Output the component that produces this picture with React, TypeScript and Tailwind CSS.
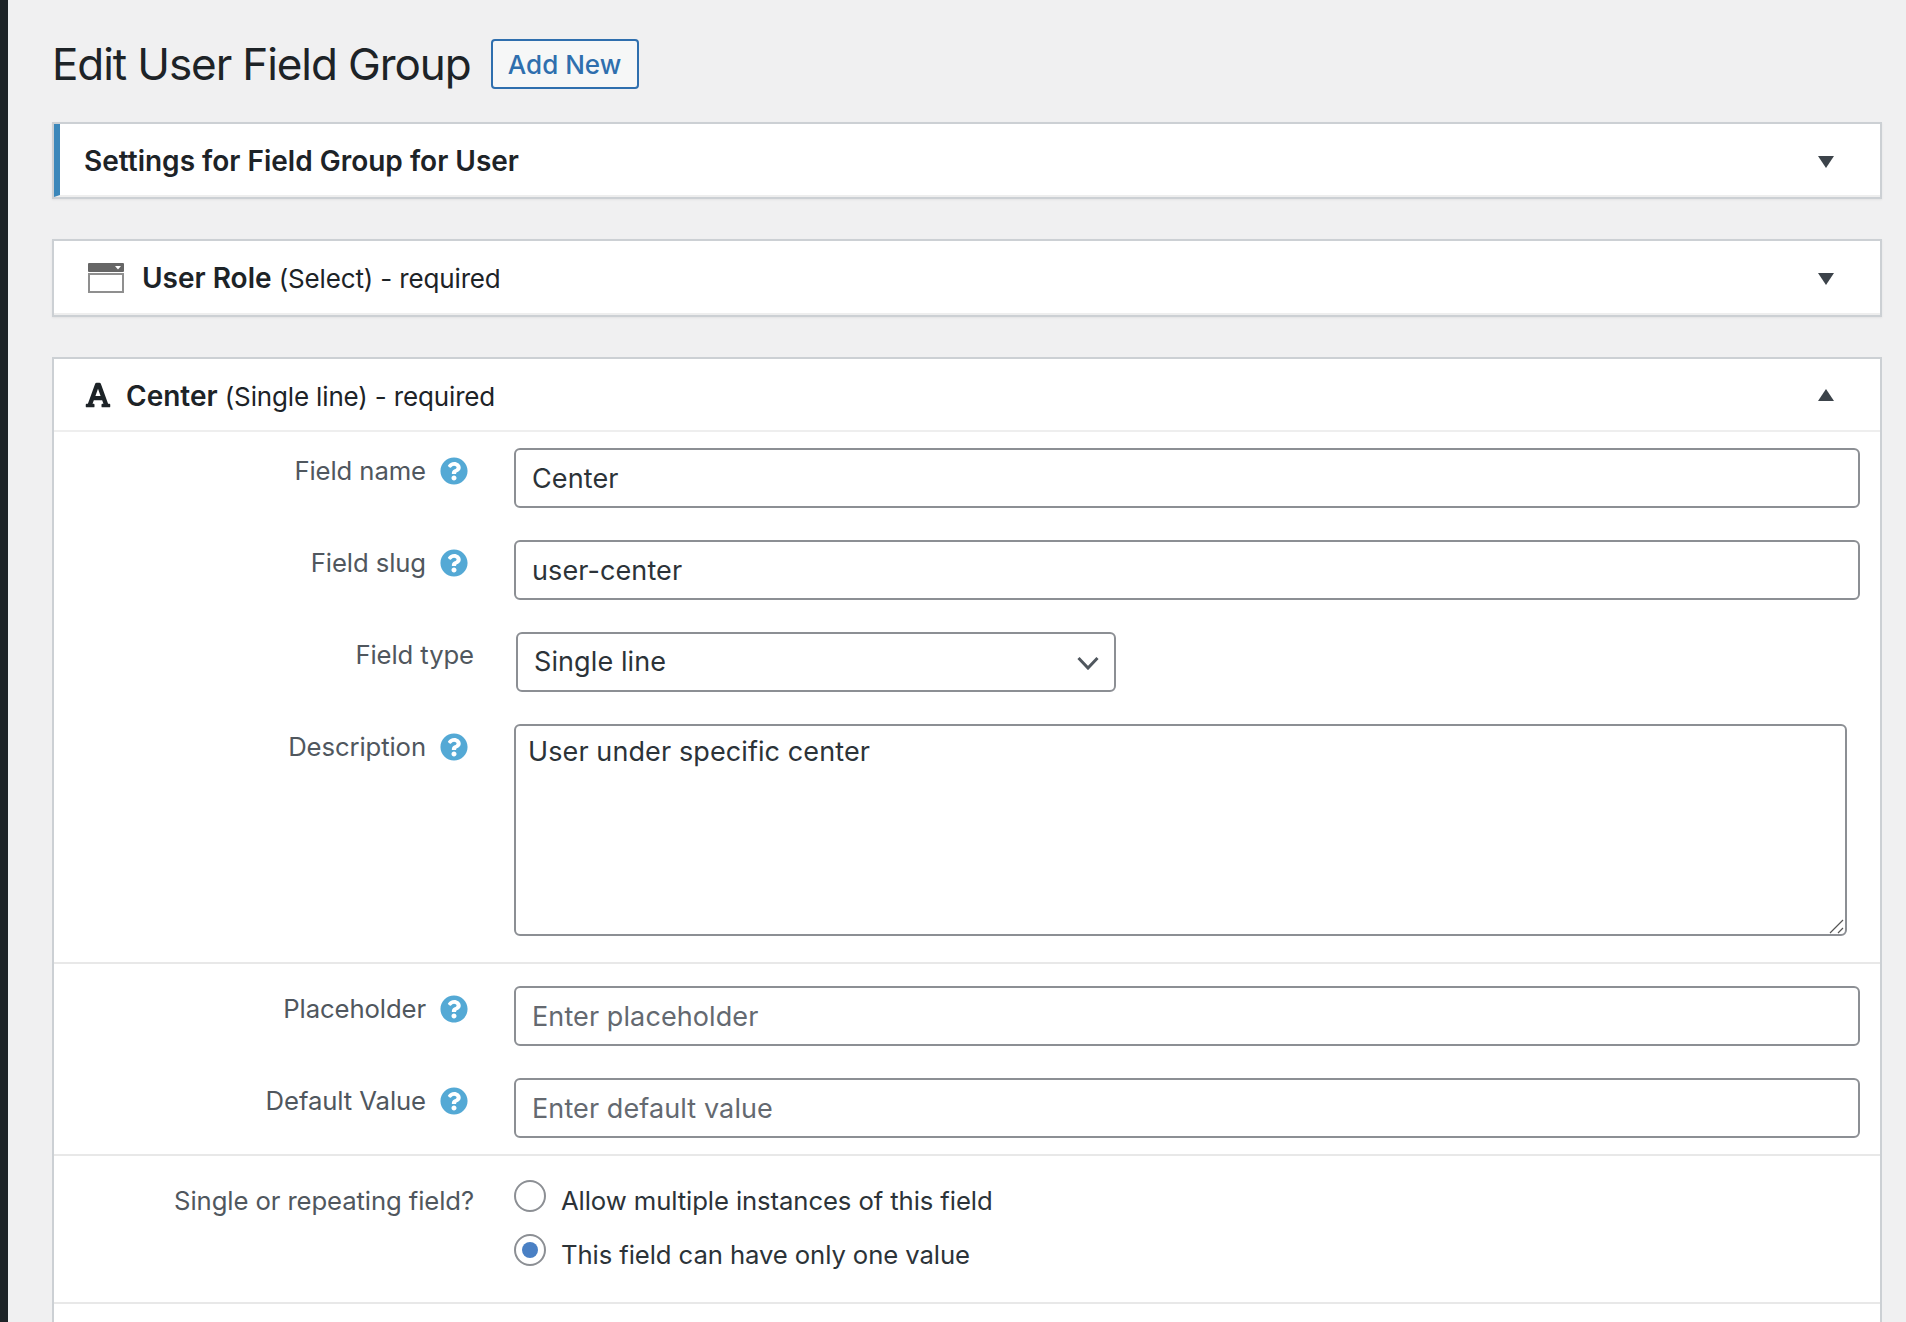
import { FaFont, FaQuestionCircle } from "react-icons/fa";

const font = { fontFamily: "Inter, 'Noto Sans', sans-serif" };

function Caret({ up, className }: { up?: boolean; className?: string }) {
    return (
        <svg width="16" height="12" viewBox="0 0 16 12" className={`mr-[46px] shrink-0 ${className}`}>
            <path d={up ? "M8 0L16 12H0Z" : "M0 0H16L8 12Z"} fill="#3c434a" />
        </svg>
    );
}

function SelectIcon() {
    return (
        <svg width="36" height="30" viewBox="0 0 36 30" className="shrink-0 mt-[2px]">
            <rect x="0" y="0" width="36" height="9" rx="1" fill="#666666" />
            <path d="M27 3H33L30 6.5Z" fill="#ffffff" />
            <rect x="1" y="11" width="34" height="18" fill="#ffffff" stroke="#8f8f8f" strokeWidth="2" />
        </svg>
    );
}

function Label({ text, help, height = "h-[46px]" }: { text: string; help?: boolean; height?: string }) {
    return (
        <div className={`w-[420px] shrink-0 flex justify-end items-center ${height} ${help ? "pr-[6px]" : ""}`}>
            <span className="text-[25.7px] leading-none text-[#50575e] tracking-[-0.1px]">{text}</span>
            {help && <FaQuestionCircle className="ml-[14px] text-[#54a9d5]" size={28} />}
        </div>
    );
}

function TextField({ value, placeholder }: { value?: string; placeholder?: string }) {
    return (
        <input
            readOnly
            value={value}
            placeholder={placeholder}
            className="w-[1346px] h-[60px] rounded-[6px] border-2 border-[#8c8f94] bg-white px-[16px] pt-px text-[27px] text-[#2c3338] tracking-[0.1px] placeholder:text-[#646970] outline-none"
            style={font}
        />
    );
}

function PanelHead({ children }: { children: React.ReactNode }) {
    return (
        <section className="border-2 border-[#ccd0d4] bg-white shadow-[0_1px_2px_rgba(0,0,0,0.06)]">
            {children}
        </section>
    );
}

function Radio({ checked, text }: { checked?: boolean; text: string }) {
    return (
        <div className="flex items-start gap-[15px] h-8">
            <span className="w-8 h-8 rounded-full border-2 border-[#8c8f94] bg-white flex items-center justify-center shrink-0">
                {checked && <span className="w-4 h-4 rounded-full bg-[#4a80c4]" />}
            </span>
            <span className="text-[25.7px] leading-none text-[#2c3338] pt-[8px] tracking-[-0.1px]">{text}</span>
        </div>
    );
}

export default function App() {
    return (
        <div className="h-[1322px] overflow-hidden flex bg-[#f0f0f1]" style={font}>
            <aside className="w-2 bg-[#1d2327] shrink-0" />
            <main className="w-[1830px] ml-[44px]">
                <header className="flex items-center h-[50px] mt-[39px] mb-[33px]">
                    <h1 className="text-[44px] leading-none text-[#1d2327] tracking-[-1.1px] mr-[20px]">Edit User Field Group</h1>
                    <a href="#" className="h-[50px] w-[148px] flex items-center justify-center rounded-[4px] border-2 border-[#2f6fae] bg-[#f6f7f7] text-[26px] font-medium text-[#2f6fae]">
                        Add New
                    </a>
                </header>

                <div className="flex flex-col gap-[40px]">
                    <PanelHead>
                        <div className="h-[73px] border-l-[6px] border-l-[#3b87ba] border-b-2 border-b-[#eeeeee] flex items-center justify-between pl-[24px]">
                            <h2 className="text-[28px] font-semibold text-[#1d2327] pt-[2px]">Settings for Field Group for User</h2>
                            <Caret className="mt-[5px]" />
                        </div>
                    </PanelHead>

                    <PanelHead>
                        <div className="h-[74px] border-b-2 border-b-[#eeeeee] flex items-center justify-between pl-[34px]">
                            <div className="flex items-center gap-[18px]">
                                <SelectIcon />
                                <p className="text-[26px] text-[#1d2327] tracking-[-0.15px] pt-[2px]">
                                    <strong className="text-[28px] font-semibold tracking-normal">User Role</strong> (Select) - required
                                </p>
                            </div>
                            <Caret className="mt-[4px]" />
                        </div>
                    </PanelHead>

                    <section className="border-2 border-b-0 border-[#ccd0d4] bg-white h-[1000px]">
                        <div className="h-[73px] border-b-2 border-b-[#eeeeee] flex items-center justify-between pl-[30px]">
                            <div className="flex items-center gap-[14px]">
                                <FaFont className="text-[#1d2327]" size={28} />
                                <p className="text-[26px] text-[#1d2327] tracking-[-0.15px] pt-[3px]">
                                    <strong className="text-[28px] font-semibold tracking-normal">Center</strong> (Single line) - required
                                </p>
                            </div>
                            <Caret up className="mt-[1px]" />
                        </div>

                        <div className="flex flex-col gap-[32px] pt-[16px] pb-[26px] border-b-2 border-b-[#e8e8e8]">
                            <div className="flex gap-[40px]">
                                <Label text="Field name" help />
                                <TextField value="Center" />
                            </div>
                            <div className="flex gap-[40px]">
                                <Label text="Field slug" help />
                                <TextField value="user-center" />
                            </div>
                            <div className="flex gap-[40px]">
                                <Label text="Field type" />
                                <div className="relative ml-[2px] w-[600px]">
                                    <select
                                        defaultValue="Single line"
                                        className="w-full h-[60px] appearance-none rounded-[6px] border-2 border-[#8c8f94] bg-white px-[16px] text-[27px] text-[#2c3338] tracking-[0.1px] outline-none"
                                    >
                                        <option>Single line</option>
                                    </select>
                                    <svg width="22" height="14" viewBox="0 0 22 14" className="absolute right-[17px] top-[24px]">
                                        <path d="M1.5 2L11 12L20.5 2" fill="none" stroke="#50575e" strokeWidth="3" />
                                    </svg>
                                </div>
                            </div>
                            <div className="flex gap-[40px]">
                                <Label text="Description" help />
                                <div className="relative w-[1333px] h-[212px]">
                                    <textarea
                                        readOnly
                                        value="User under specific center"
                                        className="block w-full h-full resize-none rounded-[6px] border-2 border-[#8c8f94] bg-white px-[12px] py-[6px] text-[27px] text-[#2c3338] tracking-[0.1px] outline-none"
                                    />
                                    <svg width="15" height="15" viewBox="0 0 15 15" className="absolute right-[3px] bottom-[2px]">
                                        <path d="M1 14L14 1M9 14L14 9" fill="none" stroke="#555555" strokeWidth="1.2" />
                                    </svg>
                                </div>
                            </div>
                        </div>

                        <div className="flex flex-col gap-[32px] pt-[22px] pb-[16px] border-b-2 border-b-[#e8e8e8]">
                            <div className="flex gap-[40px]">
                                <Label text="Placeholder" help />
                                <TextField placeholder="Enter placeholder" />
                            </div>
                            <div className="flex gap-[40px]">
                                <Label text="Default Value" help />
                                <TextField placeholder="Enter default value" />
                            </div>
                        </div>

                        <div className="flex gap-[40px] pt-[24px] pb-[36px] border-b-2 border-b-[#e8e8e8]">
                            <Label text="Single or repeating field?" height="h-[42px]" />
                            <div className="flex flex-col gap-[22px]">
                                <Radio text="Allow multiple instances of this field" />
                                <Radio checked text="This field can have only one value" />
                            </div>
                        </div>
                    </section>
                </div>
            </main>
        </div>
    );
}
